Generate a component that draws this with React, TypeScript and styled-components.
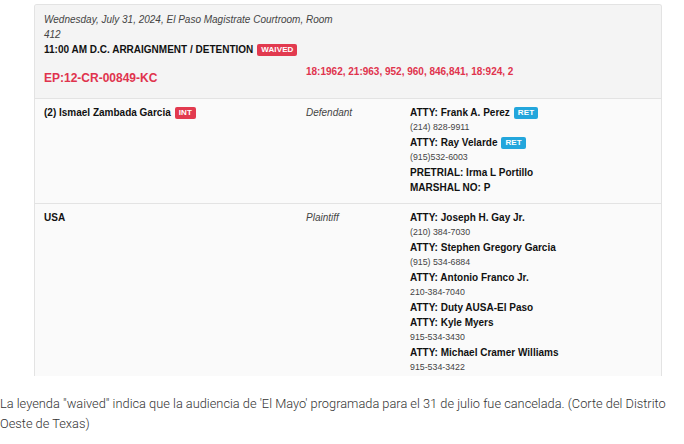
import React from "react";
import styled, { createGlobalStyle } from "styled-components";

const Global = createGlobalStyle`
  html, body { margin: 0; padding: 0; background: #ffffff; }
  body { font-family: "Liberation Sans", Arial, sans-serif; }
`;

const Page = styled.div`
  width: 684px;
  height: 444px;
  overflow: hidden;
  background: #fff;
`;

const Figure = styled.div`
  margin: 4px 0 0 34px;
  width: 628px;
  height: 372px;
  overflow: hidden;
  border: 1px solid #e3e3e3;
  border-bottom: none;
  border-radius: 3px 3px 0 0;
  box-sizing: border-box;
  background: #fafafa;
`;

const Header = styled.div`
  background: #f4f4f4;
  border-bottom: 1px solid #e3e3e3;
  padding: 7px 9px 0 9px;
  height: 94px;
  box-sizing: border-box;
`;

const DateLine = styled.div`
  max-width: 300px;
  font-size: 10px;
  line-height: 15px;
  font-style: italic;
  color: #444;
`;

const TimeLine = styled.div`
  display: flex;
  align-items: center;
  gap: 4px;
  height: 15px;
  font-size: 10px;
  font-weight: bold;
  color: #111;
`;

const Badge = styled.span<{ $tone: "red" | "blue" }>`
  display: inline-block;
  background: ${(p) => (p.$tone === "red" ? "#e23a4f" : "#23a6dc")};
  color: #fff;
  font-size: 8px;
  font-weight: bold;
  line-height: 12px;
  padding: 0 4px;
  border-radius: 2px;
  letter-spacing: 0.1px;
`;

const CaseRow = styled.div`
  display: grid;
  grid-template-columns: 262px 1fr;
  margin-top: 8px;
`;

const CaseNo = styled.div`
  font-size: 12px;
  line-height: 16px;
  font-weight: bold;
  color: #e0334d;
  padding-top: 5px;
`;

const Charges = styled.div`
  font-size: 10px;
  line-height: 14px;
  font-weight: bold;
  color: #e0334d;
`;

const PartyRow = styled.div<{ $h: number }>`
  display: grid;
  grid-template-columns: 262px 104px 1fr;
  padding: 6px 9px 0 9px;
  height: ${(p) => p.$h}px;
  box-sizing: border-box;
  border-bottom: 1px solid #e3e3e3;
  background: #fafafa;
`;

const Name = styled.div`
  display: flex;
  align-items: center;
  gap: 4px;
  height: 15px;
  font-size: 10px;
  font-weight: bold;
  color: #111;
`;

const Role = styled.div`
  font-size: 10px;
  line-height: 15px;
  font-style: italic;
  color: #444;
`;

const Attys = styled.div`
  display: flex;
  flex-direction: column;
`;

const AttyLine = styled.div`
  display: flex;
  align-items: center;
  gap: 4px;
  height: 15px;
  line-height: 15px;
  font-size: 10px;
  font-weight: bold;
  color: #111;
`;

const Phone = styled.div`
  height: 15px;
  line-height: 15px;
  font-size: 8.8px;
  color: #444;
`;

const Caption = styled.p`
  margin: 18px 0 0 0;
  font-family: Roboto, "Liberation Sans", sans-serif;
  font-weight: 300;
  font-size: 12.8px;
  line-height: 20px;
  color: #333;
  width: 672px;
`;

type Entry = { name: string; badge?: string; phone?: string };

const defAttys: Entry[] = [
  { name: "ATTY: Frank A. Perez", badge: "RET", phone: "(214) 828-9911" },
  { name: "ATTY: Ray Velarde", badge: "RET", phone: "(915)532-6003" },
  { name: "PRETRIAL: Irma L Portillo" },
  { name: "MARSHAL NO: P" },
];

const usaAttys: Entry[] = [
  { name: "ATTY: Joseph H. Gay Jr.", phone: "(210) 384-7030" },
  { name: "ATTY: Stephen Gregory Garcia", phone: "(915) 534-6884" },
  { name: "ATTY: Antonio Franco Jr.", phone: "210-384-7040" },
  { name: "ATTY: Duty AUSA-El Paso" },
  { name: "ATTY: Kyle Myers", phone: "915-534-3430" },
  { name: "ATTY: Michael Cramer Williams", phone: "915-534-3422" },
];

function AttyList({ list }: { list: Entry[] }) {
  return (
    <Attys>
      {list.map((a) => (
        <React.Fragment key={a.name}>
          <AttyLine>
            {a.name}
            {a.badge && <Badge $tone="blue">{a.badge}</Badge>}
          </AttyLine>
          {a.phone && <Phone>{a.phone}</Phone>}
        </React.Fragment>
      ))}
    </Attys>
  );
}

export default function App() {
  return (
    <Page>
      <Global />
      <Figure>
        <Header>
          <DateLine>Wednesday, July 31, 2024, El Paso Magistrate Courtroom, Room 412</DateLine>
          <TimeLine>
            11:00 AM D.C. ARRAIGNMENT / DETENTION <Badge $tone="red">WAIVED</Badge>
          </TimeLine>
          <CaseRow>
            <CaseNo>EP:12-CR-00849-KC</CaseNo>
            <Charges>18:1962, 21:963, 952, 960, 846,841, 18:924, 2</Charges>
          </CaseRow>
        </Header>
        <PartyRow $h={105}>
          <Name>
            (2) Ismael Zambada Garcia <Badge $tone="red">INT</Badge>
          </Name>
          <Role>Defendant</Role>
          <AttyList list={defAttys} />
        </PartyRow>
        <PartyRow $h={200}>
          <Name>USA</Name>
          <Role>Plaintiff</Role>
          <AttyList list={usaAttys} />
        </PartyRow>
      </Figure>
      <Caption>
        La leyenda "waived" indica que la audiencia de 'El Mayo' programada para el 31 de julio fue cancelada. (Corte del Distrito Oeste de Texas)
      </Caption>
    </Page>
  );
}
